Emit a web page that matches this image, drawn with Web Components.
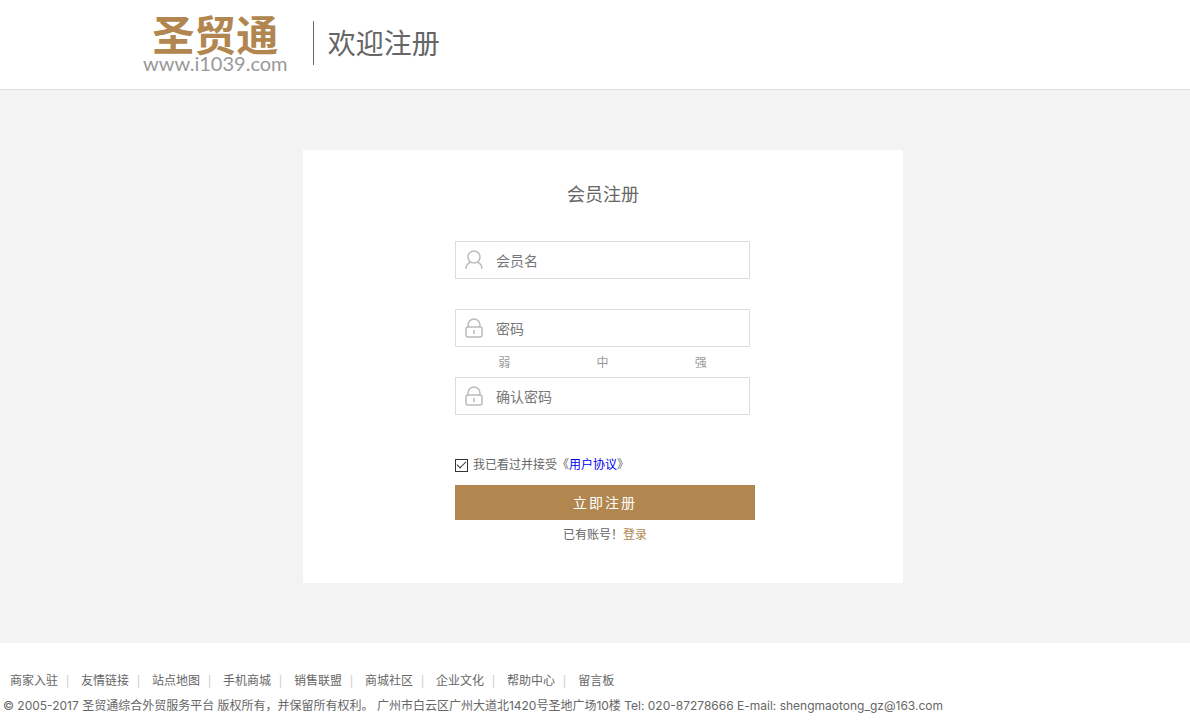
<!DOCTYPE html>
<html lang="zh-CN">
<head>
<meta charset="UTF-8">
<meta name="viewport" content="width=device-width, initial-scale=1">
<title>会员注册</title>
<style>
    :root {
        --gold: #b1874f;
        --text: #666;
        --muted: #999;
        --line: #ddd;
        --page: #f3f3f3;
    }

    body {
        margin: 0;
        background-color: #fff;
        color: var(--text);
        font-family: "Noto Sans", "Noto Sans CJK SC", sans-serif;
        font-size: 12px;
        line-height: 20px;
    }
</style>
</head>
<body>
<site-header>欢迎注册</site-header>
<register-main>
    <register-card>
        <span slot="title">会员注册</span>
        <form-field icon="user" type="text" label="会员名"></form-field>
        <form-field icon="lock" type="password" label="密码"></form-field>
        <password-strength></password-strength>
        <form-field icon="lock" type="password" label="确认密码"></form-field>
        <agree-check></agree-check>
        <submit-button>立即注册</submit-button>
        <login-hint></login-hint>
    </register-card>
</register-main>
<site-footer></site-footer>

<script>
    class BaseElement extends HTMLElement {
        constructor() {
            super();
            this.attachShadow({mode: 'open'});
        }

        connectedCallback() {
            this.shadowRoot.innerHTML = `
                <style>
                    *, *::before, *::after { box-sizing: border-box; }
                    ${this.css()}
                </style>
                ${this.html()}
            `;
        }
    }

    class SiteLogo extends BaseElement {
        html() {
            return `
                <a href="#">
                    <span class="name">圣贸通</span>
                    <span class="domain">www.i1039.com</span>
                </a>
            `;
        }

        css() {
            return `
                :host {
                    display: block;
                    width: 145px;
                }
                a {
                    display: flex;
                    flex-direction: column;
                    align-items: center;
                    text-decoration: none;
                    white-space: nowrap;
                }
                .name {
                    color: var(--gold);
                    font-family: "Noto Sans CJK SC", sans-serif;
                    font-size: 42px;
                    font-weight: bold;
                    line-height: 40px;
                }
                .domain {
                    color: var(--muted);
                    font-family: Lato, sans-serif;
                    font-size: 20px;
                    line-height: 20px;
                }
            `;
        }
    }

    class SiteHeader extends BaseElement {
        html() {
            return `
                <header>
                    <site-logo></site-logo>
                    <h1><slot></slot></h1>
                </header>
            `;
        }

        css() {
            return `
                :host {
                    display: block;
                    border-bottom: 1px solid var(--line);
                }
                header {
                    display: flex;
                    align-items: center;
                    gap: 25px;
                    padding: 13px 12% 16px;
                }
                h1 {
                    margin: 0;
                    padding-left: 14px;
                    border-left: 1px solid var(--text);
                    font-size: 28px;
                    font-weight: normal;
                    line-height: 44px;
                }
            `;
        }
    }

    class RegisterMain extends BaseElement {
        html() {
            return `<main><slot></slot></main>`;
        }

        css() {
            return `
                :host {
                    display: block;
                    background-color: var(--page);
                }
                main {
                    display: flex;
                    justify-content: center;
                    padding: 60px 0 60px 16px;
                }
            `;
        }
    }

    class RegisterCard extends BaseElement {
        html() {
            return `
                <h2><slot name="title"></slot></h2>
                <form><slot></slot></form>
            `;
        }

        css() {
            return `
                :host {
                    display: block;
                    width: 600px;
                    max-width: 100%;
                    padding: 29px 0 38px;
                    background-color: #fff;
                    box-sizing: border-box;
                }
                h2 {
                    margin: 0 0 32px;
                    font-size: 18px;
                    font-weight: normal;
                    line-height: 30px;
                    text-align: center;
                }
                form {
                    width: 300px;
                    margin-left: 152px;
                }
            `;
        }
    }

    const icons = {
        user: `
            <circle cx="9" cy="7" r="6"/>
            <path d="M1 19c0-4 2-6 5-7M12 12c3 1 5 3 5 7"/>
        `,
        lock: `
            <rect x="1" y="9" width="16" height="10" rx="2"/>
            <path d="M3 9V7a6 6 0 0 1 12 0V9M9 12v4"/>
        `
    };

    class FormField extends BaseElement {
        html() {
            const label = this.getAttribute('label');
            return `
                <label>
                    <svg width="18" height="20" viewBox="0 0 18 20" aria-hidden="true">
                        ${icons[this.getAttribute('icon')]}
                    </svg>
                    <input type="${this.getAttribute('type')}" placeholder="${label}" aria-label="${label}">
                </label>
            `;
        }

        css() {
            return `
                :host {
                    display: block;
                    margin-bottom: 30px;
                }
                label {
                    display: flex;
                    align-items: center;
                    gap: 13px;
                    width: 295px;
                    height: 38px;
                    padding: 0 9px;
                    border: 1px solid var(--line);
                }
                svg {
                    flex: none;
                    fill: none;
                    stroke: #bbb;
                    stroke-width: 1.5;
                }
                input {
                    flex: 1;
                    min-width: 0;
                    height: 34px;
                    padding: 0;
                    border: 0;
                    outline: 0;
                    background: none;
                    color: var(--text);
                    font-family: inherit;
                    font-size: 14px;
                }
                input::placeholder { color: #777; }
            `;
        }
    }

    class PasswordStrength extends BaseElement {
        html() {
            return `<span>弱</span><span>中</span><span>强</span>`;
        }

        css() {
            return `
                :host {
                    display: grid;
                    grid-template-columns: repeat(3, 1fr);
                    width: 295px;
                    height: 30px;
                    margin-top: -30px;
                    color: var(--muted);
                    line-height: 32px;
                    text-align: center;
                }
            `;
        }
    }

    class AgreeCheck extends BaseElement {
        html() {
            return `
                <input type="checkbox" id="agree" checked>
                <label for="agree">我已看过并接受《<a href="#">用户协议</a>》</label>
            `;
        }

        css() {
            return `
                :host {
                    display: flex;
                    align-items: center;
                    gap: 5px;
                    margin: 40px 0 10px;
                }
                input {
                    display: grid;
                    place-items: center;
                    appearance: none;
                    width: 13px;
                    height: 13px;
                    margin: 0;
                    border: 1px solid #333;
                }
                input:checked::before {
                    content: "";
                    width: 9px;
                    height: 5px;
                    margin-bottom: 3px;
                    border: solid #333;
                    border-width: 0 0 1px 1px;
                    transform: rotate(-45deg);
                }
                a {
                    color: #00e;
                    text-decoration: none;
                }
            `;
        }
    }

    class SubmitButton extends BaseElement {
        html() {
            return `<button type="button"><slot></slot></button>`;
        }

        css() {
            return `
                :host { display: block; }
                button {
                    width: 100%;
                    height: 35px;
                    padding: 0 0 2px;
                    border: 0;
                    background-color: var(--gold);
                    color: #fff;
                    font-family: inherit;
                    font-size: 14px;
                    letter-spacing: 2px;
                    cursor: pointer;
                }
            `;
        }
    }

    class LoginHint extends BaseElement {
        html() {
            return `已有账号！<a href="#">登录</a>`;
        }

        css() {
            return `
                :host {
                    display: block;
                    padding-top: 5px;
                    text-align: center;
                }
                a {
                    color: var(--gold);
                    text-decoration: none;
                }
            `;
        }
    }

    class SiteFooter extends BaseElement {
        html() {
            const links = ['商家入驻', '友情链接', '站点地图', '手机商城', '销售联盟', '商城社区', '企业文化', '帮助中心', '留言板'];
            return `
                <footer>
                    <nav>${links.map(link => `<a href="#">${link}</a>`).join('<span>|</span>')}</nav>
                    <p>© 2005-2017 圣贸通综合外贸服务平台 版权所有，并保留所有权利。 广州市白云区广州大道北1420号圣地广场10楼 Tel: 020-87278666 E-mail: shengmaotong_gz@163.com</p>
                </footer>
            `;
        }

        css() {
            return `
                :host { display: block; }
                footer {
                    padding: 25px 3px 0;
                    line-height: 25px;
                }
                nav {
                    display: flex;
                    flex-wrap: wrap;
                    padding-left: 7px;
                }
                nav a {
                    color: inherit;
                    text-decoration: none;
                }
                nav span {
                    width: 23px;
                    padding-right: 4px;
                    color: #ccc;
                    text-align: center;
                }
                p {
                    margin: 0;
                    font-family: Inter, "Noto Sans CJK SC", sans-serif;
                }
            `;
        }
    }

    customElements.define('site-logo', SiteLogo);
    customElements.define('site-header', SiteHeader);
    customElements.define('register-main', RegisterMain);
    customElements.define('register-card', RegisterCard);
    customElements.define('form-field', FormField);
    customElements.define('password-strength', PasswordStrength);
    customElements.define('agree-check', AgreeCheck);
    customElements.define('submit-button', SubmitButton);
    customElements.define('login-hint', LoginHint);
    customElements.define('site-footer', SiteFooter);
</script>
</body>
</html>
